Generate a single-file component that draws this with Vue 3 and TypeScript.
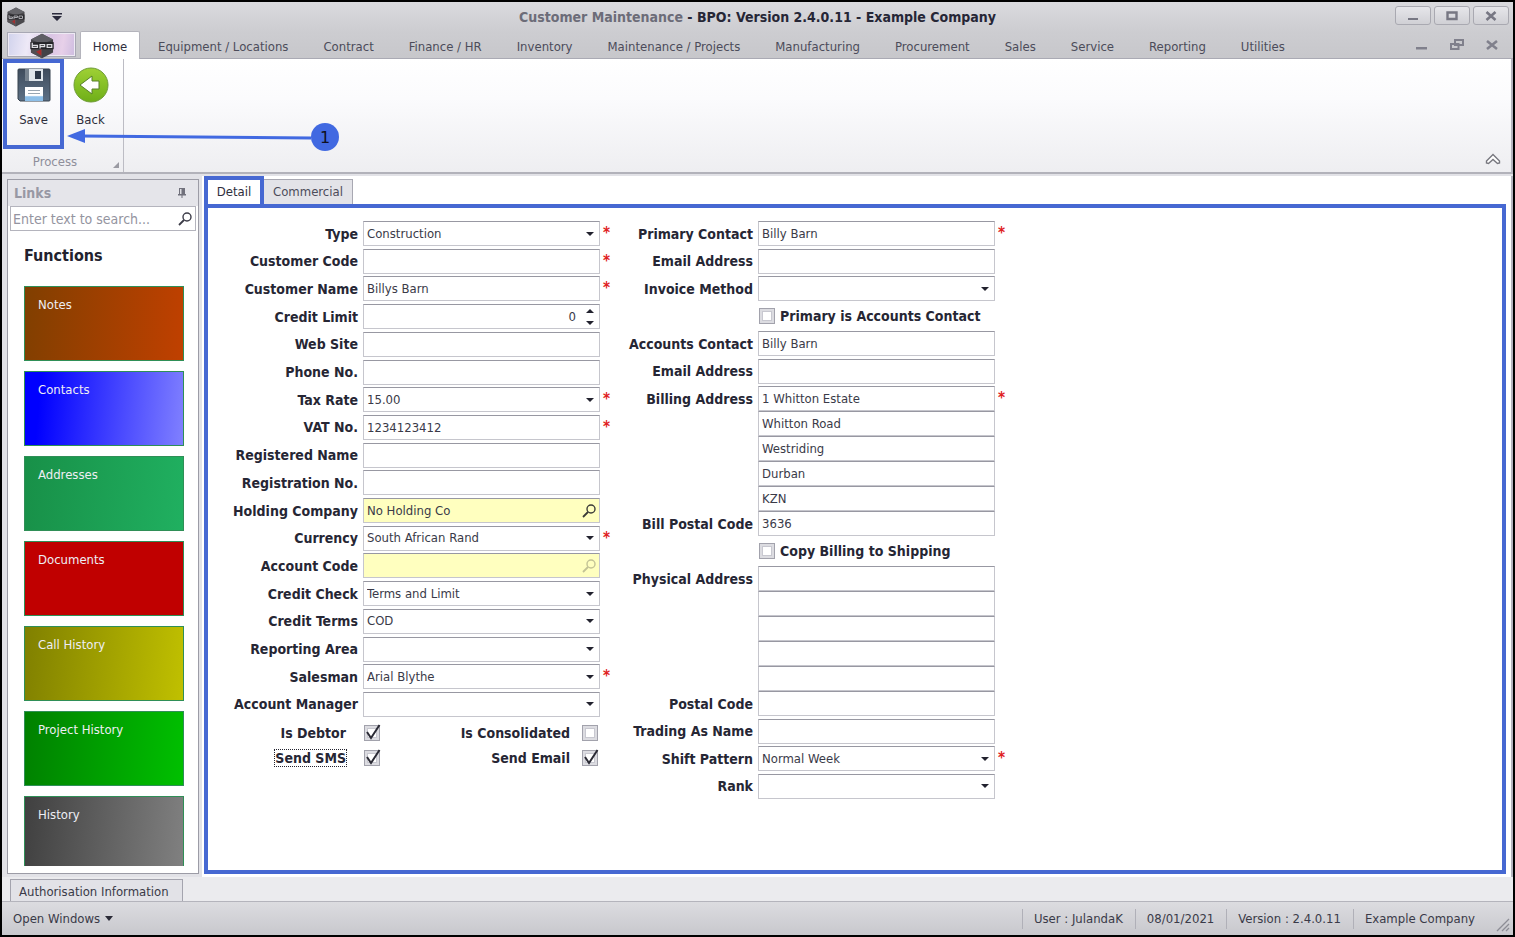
<script setup lang="ts">
import { ref } from 'vue'

type Kind = 'text' | 'select' | 'spin' | 'lookup'

interface Field {
  id: string
  label: string
  kind: Kind
  value?: string
  required?: boolean
  disabled?: boolean
}

const menus: string[] = [
  'Equipment / Locations', 'Contract', 'Finance / HR', 'Inventory', 'Maintenance / Projects',
  'Manufacturing', 'Procurement', 'Sales', 'Service', 'Reporting', 'Utilities',
]

const tiles = [
  { name: 'Notes', tone: 'notes' },
  { name: 'Contacts', tone: 'contacts' },
  { name: 'Addresses', tone: 'addresses' },
  { name: 'Documents', tone: 'documents' },
  { name: 'Call History', tone: 'calls' },
  { name: 'Project History', tone: 'projects' },
  { name: 'History', tone: 'history' },
]

const customer = ref<Field[]>([
  { id: 'type', label: 'Type', kind: 'select', value: 'Construction', required: true },
  { id: 'code', label: 'Customer Code', kind: 'text', required: true },
  { id: 'name', label: 'Customer Name', kind: 'text', value: 'Billys Barn', required: true },
  { id: 'limit', label: 'Credit Limit', kind: 'spin', value: '0' },
  { id: 'web', label: 'Web Site', kind: 'text' },
  { id: 'phone', label: 'Phone No.', kind: 'text' },
  { id: 'tax', label: 'Tax Rate', kind: 'select', value: '15.00', required: true },
  { id: 'vat', label: 'VAT No.', kind: 'text', value: '1234123412', required: true },
  { id: 'regname', label: 'Registered Name', kind: 'text' },
  { id: 'regno', label: 'Registration No.', kind: 'text' },
  { id: 'holding', label: 'Holding Company', kind: 'lookup', value: 'No Holding Co' },
  { id: 'currency', label: 'Currency', kind: 'select', value: 'South African Rand', required: true },
  { id: 'account', label: 'Account Code', kind: 'lookup', disabled: true },
  { id: 'check', label: 'Credit Check', kind: 'select', value: 'Terms and Limit' },
  { id: 'terms', label: 'Credit Terms', kind: 'select', value: 'COD' },
  { id: 'area', label: 'Reporting Area', kind: 'select' },
  { id: 'salesman', label: 'Salesman', kind: 'select', value: 'Arial Blythe', required: true },
  { id: 'manager', label: 'Account Manager', kind: 'select' },
])

const primary = ref<Field[]>([
  { id: 'contact', label: 'Primary Contact', kind: 'text', value: 'Billy Barn', required: true },
  { id: 'email', label: 'Email Address', kind: 'text' },
  { id: 'invoice', label: 'Invoice Method', kind: 'select' },
])

const accounts = ref<Field[]>([
  { id: 'acontact', label: 'Accounts Contact', kind: 'text', value: 'Billy Barn' },
  { id: 'aemail', label: 'Email Address', kind: 'text' },
])

const billing = ref<Field[]>([
  { id: 'bill1', label: 'Billing Address', kind: 'text', value: '1 Whitton Estate', required: true },
  { id: 'bill2', label: '', kind: 'text', value: 'Whitton Road' },
  { id: 'bill3', label: '', kind: 'text', value: 'Westriding' },
  { id: 'bill4', label: '', kind: 'text', value: 'Durban' },
  { id: 'bill5', label: '', kind: 'text', value: 'KZN' },
  { id: 'billcode', label: 'Bill Postal Code', kind: 'text', value: '3636' },
])

const physical = ref<Field[]>([
  { id: 'phys1', label: 'Physical Address', kind: 'text' },
  { id: 'phys2', label: '', kind: 'text' },
  { id: 'phys3', label: '', kind: 'text' },
  { id: 'phys4', label: '', kind: 'text' },
  { id: 'phys5', label: '', kind: 'text' },
  { id: 'physcode', label: 'Postal Code', kind: 'text' },
])

const trading = ref<Field[]>([
  { id: 'trading', label: 'Trading As Name', kind: 'text' },
  { id: 'shift', label: 'Shift Pattern', kind: 'select', value: 'Normal Week', required: true },
  { id: 'rank', label: 'Rank', kind: 'select' },
])

type Block =
  | { type: 'fields'; fields: Field[] }
  | { type: 'check'; id: string; label: string }

const single = (list: Field[]): Block[] => list.map((f) => ({ type: 'fields', fields: [f] }))

const leftBlocks: Block[] = single(customer.value)
const rightBlocks: Block[] = [
  ...single(primary.value),
  { type: 'check', id: 'sameContact', label: 'Primary is Accounts Contact' },
  ...single(accounts.value),
  { type: 'fields', fields: billing.value },
  { type: 'check', id: 'copyBilling', label: 'Copy Billing to Shipping' },
  { type: 'fields', fields: physical.value },
  ...single(trading.value),
]
const columns = [
  { key: 'left', blocks: leftBlocks },
  { key: 'right', blocks: rightBlocks },
]

const flags = ref([
  { id: 'debtor', label: 'Is Debtor', on: true, focused: false },
  { id: 'consolidated', label: 'Is Consolidated', on: false, focused: false },
  { id: 'sms', label: 'Send SMS', on: true, focused: true },
  { id: 'sendmail', label: 'Send Email', on: true, focused: false },
])
const rightChecks = ref<Record<string, boolean>>({ sameContact: false, copyBilling: false })
const search = ref('')

function step(field: Field, by: number) {
  field.value = String(Number(field.value ?? 0) + by)
}
</script>

<template>
  <div class="window">
    <header class="titlebar">
      <div class="quickbar">
        <svg class="logo-small" viewBox="0 0 40 40" aria-hidden="true">
          <path d="M20 1 37 10V30L20 39 3 30V10Z" fill="#4a494d" />
          <path d="M20 1 37 10 20 17 3 10Z" fill="#66666b" />
          <path d="M20 22V39L3 30V22Z" fill="#575356" />
          <path d="M3 15H37V25H3Z" fill="#2b2b2f" />
          <path d="M6 16V23H13V20H6M16 24V18H23V21H16M26 18H33V23H26Z" fill="none" stroke="#a9a9ae" stroke-width="2" />
          <path d="M12 29 18 25V34Z" fill="#a33030" />
        </svg>
        <button class="quick" aria-label="Customize quick access">
          <svg viewBox="0 0 10 8"><path d="M0 0H10V1.500H0ZM0 3H10L5 8Z" fill="#2a2a3c" /></svg>
        </button>
      </div>
      <h1 class="title"><span>Customer Maintenance</span> - BPO: Version 2.4.0.11 - Example Company</h1>
      <div class="winbuttons">
        <button aria-label="Minimize"><svg viewBox="0 0 12 12"><path d="M1 8H11V10H1Z" fill="#777783" /></svg></button>
        <button aria-label="Maximize"><svg viewBox="0 0 12 12"><path d="M1.500 2.500H10.500V9H1.500Z" fill="none" stroke="#777783" stroke-width="2.400" /></svg></button>
        <button aria-label="Close"><svg viewBox="0 0 12 12"><path d="M1.500 2 10.500 10M10.500 2 1.500 10" stroke="#777783" stroke-width="2.600" /></svg></button>
      </div>
    </header>

    <nav class="menubar">
      <button class="appbutton" aria-label="Application menu">
        <svg viewBox="0 0 40 40">
          <path d="M20 1 37 10V30L20 39 3 30V10Z" fill="#434347" />
          <path d="M20 1 37 10 20 17 3 10Z" fill="#5f5f65" />
          <path d="M20 24V39L3 30V24Z" fill="#524e51" />
          <path d="M2 14H38V25H2Z" fill="#242428" />
          <path d="M5 15V22H13V19H5M17 24V18H24V21H17M28 18H35V22H28Z" fill="none" stroke="#dcdce0" stroke-width="2" />
          <path d="M11 29 19 25V35Z" fill="#a82c2c" />
        </svg>
      </button>
      <button class="menu active">Home</button>
      <div class="menus">
        <button v-for="m in menus" :key="m" class="menu">{{ m }}</button>
      </div>
      <div class="mdi">
        <button aria-label="Minimize child"><svg viewBox="0 0 14 14"><path d="M1 9H12V11.500H1Z" fill="#80808c" /></svg></button>
        <button aria-label="Restore child"><svg viewBox="0 0 14 14"><path d="M5 2H13V7H5ZM1 6H8.500V11H1Z" fill="#cacace" stroke="#80808c" stroke-width="2" /></svg></button>
        <button aria-label="Close child"><svg viewBox="0 0 14 14"><path d="M2 3 12 11M12 3 2 11" stroke="#80808c" stroke-width="2.600" /></svg></button>
      </div>
    </nav>

    <section class="ribbon">
      <div class="group">
        <div class="actions">
          <button class="action marked">
            <svg viewBox="0 0 34 34">
              <defs>
                <linearGradient id="disk" x1="0" y1="0" x2="0" y2="1"><stop offset="0" stop-color="#3f4c5c" /><stop offset="1" stop-color="#5d7186" /></linearGradient>
                <linearGradient id="paper" x1="0" y1="0" x2="0" y2="1"><stop offset="0.600" stop-color="#fff" /><stop offset="0.700" stop-color="#8dbfe8" /></linearGradient>
              </defs>
              <path d="M2 1H32Q33 1 33 2V32Q33 33 32 33H3L1 31V2Q1 1 2 1Z" fill="url(#disk)" stroke="#37424f" />
              <path d="M8 1H26V13H8Z" fill="#dfe5ea" />
              <path d="M18 3H24V11H18Z" fill="#2b3747" />
              <path d="M8 1H12V13H8Z" fill="#77838f" />
              <path d="M8 19H26V33H8Z" fill="url(#paper)" />
              <path d="M11 22.500H23M11 25.500H23" stroke="#98a6b2" />
            </svg>
            <span>Save</span>
          </button>
          <button class="action">
            <svg viewBox="0 0 36 36">
              <defs>
                <linearGradient id="lime" x1="0" y1="0" x2="0" y2="1"><stop offset="0" stop-color="#9fd035" /><stop offset="0.500" stop-color="#86c026" /><stop offset="1" stop-color="#6fae18" /></linearGradient>
              </defs>
              <circle cx="18" cy="18" r="17" fill="url(#lime)" stroke="#6f9c38" />
              <path d="M7 18 19 9V14H26V22H19V27Z" fill="#fff" stroke="#577f2b" />
            </svg>
            <span>Back</span>
          </button>
        </div>
        <div class="caption">
          <span>Process</span>
          <svg viewBox="0 0 6 6" aria-hidden="true"><path d="M6 0V6H0Z" fill="#9a9aa2" /></svg>
        </div>
      </div>
      <button class="collapse" aria-label="Collapse ribbon">
        <svg viewBox="0 0 16 12"><path d="M1.500 8 8 1.500 14.500 8V10L12.500 10.500 8 6.500 3.500 10.500 1.500 10Z" fill="#fff" stroke="#77777f" stroke-width="1.400" /></svg>
      </button>
      <svg class="callout" viewBox="0 0 272 30" aria-hidden="true">
        <path d="M16 14 246 16" stroke="#4169e1" stroke-width="3" />
        <path d="M2 14 20 7V21Z" fill="#4169e1" />
        <circle cx="260" cy="15" r="14" fill="#4169e1" />
        <text x="260" y="21" text-anchor="middle">1</text>
      </svg>
    </section>

    <main class="workspace">
      <aside class="links">
        <div class="links-head">
          <span>Links</span>
          <button aria-label="Auto hide">
            <svg viewBox="0 0 10 12"><path d="M2 1H8V7H9V8.500H1V7H2ZM4.500 8H5.500V11H4.500Z" fill="#71717c" /><path d="M3 2H4.500V7H3Z" fill="#dedee2" /></svg>
          </button>
        </div>
        <label class="search">
          <input v-model="search" type="text" placeholder="Enter text to search..." aria-label="Search links" />
          <svg viewBox="0 0 14 14" aria-hidden="true"><circle cx="9" cy="5" r="4" fill="none" stroke="#3c3c48" stroke-width="1.400" /><path d="M6 8 1 13" stroke="#3c3c48" stroke-width="1.800" /></svg>
        </label>
        <h2>Functions</h2>
        <div class="tiles">
          <button v-for="t in tiles" :key="t.name" class="tile" :class="t.tone">{{ t.name }}</button>
        </div>
      </aside>

      <section class="editor">
        <div class="tabs" role="tablist">
          <button class="tab selected" role="tab" aria-selected="true">Detail</button>
          <button class="tab" role="tab" aria-selected="false">Commercial</button>
        </div>
        <form class="sheet" @submit.prevent>
          <div v-for="col in columns" :key="col.key" class="column" :class="col.key">
            <div class="rows">
              <template v-for="(b, i) in col.blocks" :key="i">
                <div v-if="b.type === 'fields'" class="block">
                  <div v-for="f in b.fields" :key="f.id" class="row">
                    <label :for="f.id">{{ f.label }}</label>
                    <div class="box" :class="{ yellow: f.kind === 'lookup' }">
                      <template v-if="f.kind === 'select'">
                        <select :id="f.id"><option>{{ f.value }}</option></select>
                        <svg class="caret" viewBox="0 0 8 4" aria-hidden="true"><path d="M0 0H8L4 4Z" fill="#22222e" /></svg>
                      </template>
                      <template v-else-if="f.kind === 'spin'">
                        <input :id="f.id" v-model="f.value" class="number" type="text" inputmode="numeric" />
                        <span class="spin">
                          <button type="button" aria-label="Increase" @click="step(f, 1)"><svg viewBox="0 0 8 4"><path d="M0 4H8L4 0Z" fill="#22222e" /></svg></button>
                          <button type="button" aria-label="Decrease" @click="step(f, -1)"><svg viewBox="0 0 8 4"><path d="M0 0H8L4 4Z" fill="#22222e" /></svg></button>
                        </span>
                      </template>
                      <template v-else-if="f.kind === 'lookup'">
                        <input :id="f.id" v-model="f.value" type="text" :disabled="f.disabled" />
                        <button type="button" class="lookup" aria-label="Look up" :disabled="f.disabled">
                          <svg viewBox="0 0 14 14"><circle cx="9" cy="5" r="4" fill="none" stroke="#3c3c38" stroke-width="1.400" /><path d="M6 8 1 13" stroke="#3c3c38" stroke-width="1.800" /></svg>
                        </button>
                      </template>
                      <input v-else :id="f.id" v-model="f.value" type="text" :aria-label="f.label || 'Address line'" />
                    </div>
                    <span class="star">{{ f.required ? '*' : '' }}</span>
                  </div>
                </div>
                <div v-else class="row">
                  <label class="tick">
                    <input v-model="rightChecks[b.id]" type="checkbox" />
                    <span>{{ b.label }}</span>
                  </label>
                </div>
              </template>
            </div>
            <div v-if="col.key === 'left'" class="flags">
              <template v-for="f in flags" :key="f.id">
                <label :for="f.id"><span :class="{ focused: f.focused }">{{ f.label }}</span></label>
                <span class="checkwrap">
                  <input :id="f.id" v-model="f.on" type="checkbox" />
                  <svg v-if="f.on" viewBox="0 0 18 18" aria-hidden="true"><path d="M3 8 7 14 15.500 1" fill="none" stroke="#2b2b35" stroke-width="2" /></svg>
                </span>
              </template>
            </div>
          </div>
        </form>
      </section>
    </main>

    <div class="dock"><button>Authorisation Information</button></div>

    <footer class="status">
      <button>Open Windows <svg viewBox="0 0 8 5" aria-hidden="true"><path d="M0 0H8L4 5Z" fill="#2a2a36" /></svg></button>
      <div class="info">
        <span>User : JulandaK</span>
        <span>08/01/2021</span>
        <span>Version : 2.4.0.11</span>
        <span>Example Company</span>
      </div>
      <svg class="grip" viewBox="0 0 14 14" aria-hidden="true"><path d="M1 13 13 1M6 13 13 6M10 13 13 10" stroke="#8d8d96" stroke-width="1.300" /></svg>
    </footer>
  </div>
</template>

<style>
body {
  margin: 0;
}
</style>

<style scoped>
* {
  box-sizing: border-box;
}
.window {
  display: flex;
  flex-direction: column;
  min-height: 100vh;
  border: 2px solid #000;
  background: #e2e2e7;
  color: #3a3a48;
  font: 13px/16px "DejaVu Sans Condensed", "DejaVu Sans", "Noto Sans", sans-serif;
}
button {
  padding: 0;
  border: 0;
  background: none;
  color: inherit;
  font: inherit;
}
svg {
  display: block;
  flex: none;
}
.titlebar {
  display: grid;
  grid-template-columns: 1fr auto 1fr;
  align-items: center;
  height: 29px;
  padding: 0 4px;
  background: linear-gradient(#dadade, #cdcdd1);
}
.quickbar {
  display: flex;
  align-items: center;
}
.logo-small {
  width: 20px;
  height: 20px;
}
.quick {
  margin-left: 26px;
}
.quick svg {
  width: 10px;
  height: 8px;
}
.title {
  margin: 0;
  color: #262636;
  font-size: 14px;
  line-height: 16px;
  white-space: nowrap;
}
.title span {
  color: #6c6c78;
}
.winbuttons {
  display: flex;
  gap: 3px;
  justify-content: flex-end;
  padding-bottom: 2px;
}
.winbuttons button {
  display: grid;
  place-items: center;
  width: 36px;
  height: 19px;
  border: 1px solid #a9a9b1;
  border-radius: 3px;
  background: linear-gradient(#e6e6ea, #d0d0d5);
}
.winbuttons svg {
  width: 12px;
  height: 12px;
}
.menubar {
  display: flex;
  height: 28px;
  padding-left: 5px;
  border-bottom: 1px solid #aaaab4;
  background: linear-gradient(#cdcdd1, #c7c7cb);
}
.appbutton {
  display: grid;
  place-items: center;
  width: 69px;
  height: 25px;
  margin: 1px 4px 0 0;
  border: 1px solid #a8a8b4;
  box-shadow: inset 0 0 0 1px #eeeaf4;
  background: linear-gradient(100deg, #d0d2ec, #eee9f7 30%, #d9c4e4 60%, #e7d0e9 80%, #cdbce0);
}
.appbutton svg {
  width: 26px;
  height: 26px;
}
.menus {
  display: flex;
  gap: 3px;
}
.menu {
  padding: 4px 16px 0;
  color: #4c4c5a;
  white-space: nowrap;
}
.menu.active {
  width: 60px;
  height: 28px;
  margin-right: 2px;
  padding: 3px 0 0;
  border: 1px solid #b4b4bc;
  border-bottom: 0;
  border-radius: 2px 2px 0 0;
  background: #fff;
  color: #2e2e3c;
}
.mdi {
  display: flex;
  gap: 21px;
  align-items: center;
  margin-left: auto;
  padding-right: 14px;
}
.mdi svg {
  width: 14px;
  height: 14px;
}
.ribbon {
  position: relative;
  display: flex;
  justify-content: space-between;
  padding-left: 1px;
  border-right: 2px solid #b4b4be;
  border-bottom: 2px solid #b2b2ba;
  background: linear-gradient(#fff, #fbfbfd 35%, #eeeef1);
}
.group {
  width: 121px;
  border-right: 1px solid #bcbcc4;
}
.actions {
  display: flex;
}
.action {
  display: flex;
  flex-direction: column;
  gap: 9px;
  align-items: center;
  width: 53px;
  height: 90px;
  padding-top: 8px;
  color: #2e2e3c;
}
.action.marked {
  gap: 10px;
  width: 61px;
  padding-top: 5px;
  border: 4px solid #4668d2;
}
.action svg {
  width: 36px;
  height: 36px;
}
.action.marked svg {
  width: 34px;
  height: 34px;
}
.caption {
  display: flex;
  align-items: center;
  height: 23px;
  padding: 2px 4px 0 0;
  color: #8e8e9a;
}
.caption span {
  flex: 1;
  padding-right: 6px;
  text-align: center;
}
.caption svg {
  align-self: flex-end;
  width: 6px;
  height: 6px;
  margin-bottom: 4px;
}
.collapse {
  align-self: flex-end;
  margin: 0 10px 7px 0;
}
.collapse svg {
  width: 16px;
  height: 12px;
}
.callout {
  position: absolute;
  top: 63px;
  left: 62px;
  width: 274px;
  height: 30px;
  overflow: visible;
}
.callout text {
  fill: #101020;
  font-family: "DejaVu Sans", sans-serif;
  font-size: 16px;
}
.workspace {
  display: flex;
  flex: 1;
  gap: 3px;
  padding-left: 5px;
}
.links {
  width: 192px;
  margin: 5px 0 3px;
  border: 1px solid #9c9ca6;
  background: #fff;
}
.links-head {
  display: flex;
  align-items: center;
  justify-content: space-between;
  height: 26px;
  padding: 0 11px 0 6px;
  background: #e5e5ea;
  color: #9898a4;
  font-size: 14px;
  font-weight: bold;
}
.links-head svg {
  width: 10px;
  height: 12px;
}
.search {
  display: flex;
  align-items: center;
  height: 25px;
  margin: 0 2px;
  padding-right: 3px;
  border: 1px solid #b4b4bd;
}
.search input {
  flex: 1;
  min-width: 0;
  padding: 0 2px;
  border: 0;
  outline: 0;
  background: none;
  color: #3a3a48;
  font: inherit;
  font-size: 14px;
}
.search input::placeholder {
  color: #9494a0;
  opacity: 1;
}
.search svg {
  width: 14px;
  height: 14px;
}
.links h2 {
  margin: 15px 16px 20px;
  color: #22222e;
  font-size: 16px;
  line-height: 20px;
}
.tiles {
  display: flex;
  flex-direction: column;
  gap: 10px;
  margin: 0 14px 0 16px;
}
.tile {
  display: flex;
  height: 75px;
  padding: 10px 13px;
  border: 1px solid #2f8f57;
  color: #eeeef4;
  line-height: 16px;
}
.notes { background: linear-gradient(95deg, #803f00, #c04000); }
.contacts { background: linear-gradient(95deg, #0000ff 10%, #8080ff); }
.addresses { background: linear-gradient(95deg, #189048, #20b060); }
.documents { background: #c00000; }
.calls { background: linear-gradient(95deg, #808000, #c0c000); }
.projects { background: linear-gradient(95deg, #008000, #00c000); }
.history {
  height: 70px;
  border-bottom: 0;
  background: linear-gradient(95deg, #404040, #808080);
}
.editor {
  display: flex;
  flex: 1;
  flex-direction: column;
  margin-top: 2px;
  padding: 0 5px 3px 2px;
  border-right: 2px solid #b4b4be;
  background: #fff;
}
.tabs {
  display: flex;
  align-items: flex-end;
  height: 28px;
}
.tab {
  width: 89px;
  height: 25px;
  border: 1px solid #a8a8b2;
  border-left: 0;
  border-bottom: 0;
  background: #e3e3e8;
  color: #4c4c5a;
}
.tab.selected {
  width: 60px;
  height: 28px;
  border: 4px solid #4668d2;
  border-bottom: 0;
  background: #fff;
  color: #2e2e3c;
}
.sheet {
  display: flex;
  flex: 1;
  align-items: flex-start;
  padding: 13px 0;
  border: 4px solid #4668d2;
}
.column {
  --label: 155px;
}
.column.right {
  --label: 145px;
}
.rows {
  display: flex;
  flex-direction: column;
  justify-content: space-between;
  min-height: 496px;
}
.right .rows {
  min-height: 578px;
}
.row {
  display: grid;
  grid-template-columns: var(--label) 237px 13px;
  align-items: center;
  height: 25px;
}
.row > label,
.flags label {
  color: #262634;
  font-size: 14px;
  font-weight: bold;
  line-height: 16px;
  text-align: right;
  white-space: nowrap;
}
.row > label {
  padding-right: 5px;
}
.box {
  display: flex;
  align-items: center;
  height: 25px;
  border: 1px solid #c6c6cd;
  border-top-color: #9898a2;
  background: #fff;
}
.box.yellow {
  background: #ffffbf;
}
.box input,
.box select {
  flex: 1;
  min-width: 0;
  height: 23px;
  padding: 0 3px;
  border: 0;
  border-radius: 0;
  outline: 0;
  appearance: none;
  background: none;
  color: #3a3a48;
  font: inherit;
}
.box .number {
  padding-right: 10px;
  text-align: right;
}
.caret {
  width: 8px;
  height: 4px;
  margin-right: 5px;
}
.spin {
  display: flex;
  flex-direction: column;
  gap: 8px;
  margin-right: 5px;
}
.spin svg {
  width: 8px;
  height: 4px;
}
.lookup svg {
  width: 14px;
  height: 14px;
  margin-right: 3px;
}
.lookup:disabled {
  opacity: 0.3;
}
.star {
  height: 25px;
  padding-left: 3px;
  color: #e02020;
  font-size: 15px;
  font-weight: bold;
  line-height: 24px;
}
.row > .tick {
  display: flex;
  grid-column: 2;
  gap: 5px;
  align-items: center;
  padding: 0 0 0 1px;
}
input[type="checkbox"] {
  width: 16px;
  height: 16px;
  margin: 0;
  border: 1px solid #a2a2ac;
  appearance: none;
  background: #fff;
  box-shadow: inset 0 0 0 2px #dcdce1, inset 0 0 0 3px #c8c8d0;
}
.flags {
  display: grid;
  grid-template-columns: 138px 34px 190px 28px;
  row-gap: 1px;
  align-items: center;
  margin-top: 4px;
}
.checkwrap {
  position: relative;
  justify-self: end;
  height: 24px;
  padding-top: 4px;
}
.checkwrap input {
  display: block;
}
.checkwrap svg {
  position: absolute;
  top: 3px;
  left: 0;
  width: 18px;
  height: 18px;
  pointer-events: none;
}
.focused {
  outline: 1px dotted #22222e;
}
.dock {
  display: flex;
  align-items: flex-end;
  height: 24px;
  padding-left: 8px;
  background: #ebebee;
}
.dock button {
  height: 22px;
  padding: 2px 13px 0 8px;
  border: 1px solid #a4a4ae;
  border-bottom: 0;
  background: #e2e2e7;
}
.status {
  display: flex;
  align-items: center;
  height: 34px;
  padding-left: 11px;
  border-top: 1px solid #b4b4bc;
  background: linear-gradient(#dcdce0, #c8c8cd);
}
.status button {
  display: flex;
  gap: 5px;
  align-items: center;
}
.status button svg {
  width: 8px;
  height: 5px;
}
.info {
  display: flex;
  margin-left: auto;
}
.info span {
  padding: 2px 12px 2px 11px;
  border-left: 1px solid #b0b0b8;
}
.grip {
  align-self: flex-end;
  width: 14px;
  height: 14px;
  margin: 0 3px 3px 9px;
}
</style>
